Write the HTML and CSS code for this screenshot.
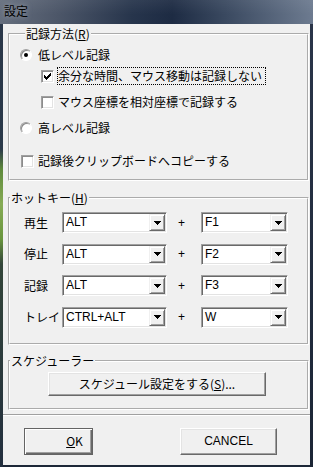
FILE: index.html
```html
<!DOCTYPE html>
<html lang="ja">
<head>
<meta charset="utf-8">
<title>設定</title>
<link rel="stylesheet" href="styles.css">
</head>
<body>
<div class="window">
  <div class="titlebar">設定</div>
  <div class="frame">
    <div class="client">
      <div class="groups">
        <fieldset class="group group-record">
          <legend class="legend legend-record">記録方法(<u>R</u>)</legend>
          <div class="row row-low">
            <span class="radio checked"></span><span class="label radio-label">低レベル記録</span>
          </div>
          <div class="row row-skip">
            <span class="checkbox checked"><svg width="7" height="7" viewBox="0 0 7 7" shape-rendering="crispEdges"><path d="M0 2h1v3H0zM1 3h1v3H1zM2 4h1v3H2zM3 3h1v3H3zM4 2h1v3H4zM5 1h1v3H5zM6 0h1v3H6z" fill="#000"/></svg></span><span class="label check-label focus">余分な時間、マウス移動は記録しない</span>
          </div>
          <div class="row row-rel">
            <span class="checkbox"></span><span class="label check-label">マウス座標を相対座標で記録する</span>
          </div>
          <div class="row row-high">
            <span class="radio"></span><span class="label radio-label">高レベル記録</span>
          </div>
          <div class="row row-clip">
            <span class="checkbox"></span><span class="label check-label">記録後クリップボードへコピーする</span>
          </div>
        </fieldset>

        <fieldset class="group group-hotkey">
          <legend class="legend">ホットキー(<u>H</u>)</legend>
          <div class="hotkeys">
            <span class="hk-label">再生</span>
            <div class="combo combo-mod"><span class="combo-text">ALT</span><span class="combo-btn"><svg width="7" height="4" viewBox="0 0 7 4" shape-rendering="crispEdges"><path d="M0 0h7v1H0zM1 1h5v1H1zM2 2h3v1H2zM3 3h1v1H3z" fill="#000"/></svg></span></div>
            <span class="plus">+</span>
            <div class="combo combo-key"><span class="combo-text">F1</span><span class="combo-btn"><svg width="7" height="4" viewBox="0 0 7 4" shape-rendering="crispEdges"><path d="M0 0h7v1H0zM1 1h5v1H1zM2 2h3v1H2zM3 3h1v1H3z" fill="#000"/></svg></span></div>

            <span class="hk-label">停止</span>
            <div class="combo combo-mod"><span class="combo-text">ALT</span><span class="combo-btn"><svg width="7" height="4" viewBox="0 0 7 4" shape-rendering="crispEdges"><path d="M0 0h7v1H0zM1 1h5v1H1zM2 2h3v1H2zM3 3h1v1H3z" fill="#000"/></svg></span></div>
            <span class="plus">+</span>
            <div class="combo combo-key"><span class="combo-text">F2</span><span class="combo-btn"><svg width="7" height="4" viewBox="0 0 7 4" shape-rendering="crispEdges"><path d="M0 0h7v1H0zM1 1h5v1H1zM2 2h3v1H2zM3 3h1v1H3z" fill="#000"/></svg></span></div>

            <span class="hk-label">記録</span>
            <div class="combo combo-mod"><span class="combo-text">ALT</span><span class="combo-btn"><svg width="7" height="4" viewBox="0 0 7 4" shape-rendering="crispEdges"><path d="M0 0h7v1H0zM1 1h5v1H1zM2 2h3v1H2zM3 3h1v1H3z" fill="#000"/></svg></span></div>
            <span class="plus">+</span>
            <div class="combo combo-key"><span class="combo-text">F3</span><span class="combo-btn"><svg width="7" height="4" viewBox="0 0 7 4" shape-rendering="crispEdges"><path d="M0 0h7v1H0zM1 1h5v1H1zM2 2h3v1H2zM3 3h1v1H3z" fill="#000"/></svg></span></div>

            <span class="hk-label">トレイ</span>
            <div class="combo combo-mod"><span class="combo-text">CTRL+ALT</span><span class="combo-btn"><svg width="7" height="4" viewBox="0 0 7 4" shape-rendering="crispEdges"><path d="M0 0h7v1H0zM1 1h5v1H1zM2 2h3v1H2zM3 3h1v1H3z" fill="#000"/></svg></span></div>
            <span class="plus">+</span>
            <div class="combo combo-key"><span class="combo-text">W</span><span class="combo-btn"><svg width="7" height="4" viewBox="0 0 7 4" shape-rendering="crispEdges"><path d="M0 0h7v1H0zM1 1h5v1H1zM2 2h3v1H2zM3 3h1v1H3z" fill="#000"/></svg></span></div>
          </div>
        </fieldset>

        <fieldset class="group group-sched">
          <legend class="legend">スケジューラー</legend>
          <div class="sched-body">
            <button class="btn btn-sched" type="button">スケジュール設定をする(<u>S</u>)...</button>
          </div>
        </fieldset>
      </div>

      <div class="separator"></div>

      <div class="buttons">
        <button class="btn btn-ok btn-default" type="button"><u>O</u>K</button>
        <button class="btn btn-cancel" type="button">CANCEL</button>
      </div>
    </div>
  </div>
</div>
</body>
</html>
```

FILE: styles.css
```css
* {
  box-sizing: border-box;
}

html, body {
  margin: 0;
  padding: 0;
  background: #1f2a3a;
}

body {
  font-family: "Noto Sans CJK JP", "Liberation Sans", sans-serif;
  font-size: 12px;
  color: #000;
}

u {
  text-decoration: underline;
  text-underline-offset: 1px;
}

.window {
  width: 313px;
  height: 467px;
  display: flex;
  flex-direction: column;
  overflow: hidden;
}

.titlebar {
  height: 24px;
  flex: none;
  padding-left: 4px;
  line-height: 22px;
  font-size: 12px;
  color: #000;
  text-shadow: 0 0 5px rgba(220, 225, 235, 0.55);
  background:
    linear-gradient(to bottom, rgba(255,255,255,0.06), rgba(255,255,255,0) 60%),
    linear-gradient(90deg, #656e7d 0%, #4d5769 18%, #27354c 42%, #1d2b43 55%, #3a4960 72%, #6d7b90 100%);
}

.frame {
  flex: 1;
  padding: 0 3px 2px 3px;
  background:
    linear-gradient(to bottom, #2a3749 0, #2c3a4a 125px, #5f8a3c 145px, #86ab55 180px, #6a963e 215px, #34463a 240px, #222e3e 100%) 0 0 / 3px 100% no-repeat,
    linear-gradient(to bottom, #2a3549, #1b2535) 100% 0 / 3px 100% no-repeat,
    #1d2737;
}

.client {
  height: 100%;
  background: #f0f0f0;
  display: flex;
  flex-direction: column;
}

.groups {
  padding: 3px 1px 0 5px;
  display: flex;
  flex-direction: column;
}

/* Etched group boxes */
.group {
  margin: 0;
  padding: 0;
  min-width: 0;
  width: 301px;
  border: 2px groove #ffffff;
}

.legend {
  padding: 0 1px;
  margin-left: 0;
  font-size: 12px;
  line-height: 14px;
  height: 14px;
  background: #f0f0f0;
}

.legend-record {
  margin-left: 5px;
}

.group-record {
  padding: 0 0 9px 10px;
}

.group-hotkey {
  margin-top: 10px;
}

.group-sched {
  margin-top: 9px;
}

/* rows in the record group */
.row {
  display: flex;
  align-items: center;
  height: 18px;
}

.row-low { margin-top: 5px; }
.row-skip { margin-top: 3px; margin-left: 21px; }
.row-rel { margin-top: 8px; margin-left: 21px; }
.row-high { margin-top: 8px; }
.row-clip { margin-top: 15px; margin-left: 1px; }

.label {
  line-height: 16px;
  white-space: nowrap;
}

.radio-label {
  margin-left: 6px;
}

.check-label {
  margin-left: 3px;
  padding: 0 3px 0 0;
  border: 1px solid transparent;
}

.focus {
  border: 1px dotted #000;
}

.radio {
  width: 12px;
  height: 12px;
  border-radius: 50%;
  flex: none;
  background: #fff;
  border: 1px solid;
  border-color: #a0a0a0 #ffffff #ffffff #a0a0a0;
  box-shadow: inset 1px 1px 0 #8a8a8a;
  display: flex;
  align-items: center;
  justify-content: center;
}

.radio.checked::after {
  content: "";
  width: 4px;
  height: 4px;
  border-radius: 50%;
  background: #000;
}

.checkbox {
  width: 13px;
  height: 13px;
  flex: none;
  background: #fff;
  border: 1px solid;
  border-color: #a0a0a0 #ffffff #ffffff #a0a0a0;
  box-shadow: inset 1px 1px 0 #8c8c8c, inset -1px -1px 0 #e3e3e3;
  display: flex;
  align-items: center;
  justify-content: center;
}

.checkbox svg {
  display: block;
}

/* hotkeys */
.hotkeys {
  display: grid;
  grid-template-columns: 38px 105px 34px 87px;
  grid-auto-rows: 21px;
  row-gap: 10.67px;
  align-items: center;
  padding: 7px 0 15px 14px;
}

.hk-label {
  line-height: 16px;
  white-space: nowrap;
}

.plus {
  font-family: "Liberation Sans", sans-serif;
  font-size: 12px;
  padding-left: 11px;
  line-height: 16px;
}

.combo {
  height: 21px;
  display: flex;
  padding: 1px;
  background: #fff;
  border: 1px solid;
  border-color: #a0a0a0 #ffffff #ffffff #a0a0a0;
  box-shadow: inset 1px 1px 0 #696969, inset -1px -1px 0 #e3e3e3;
}

.combo-text {
  flex: 1;
  padding-left: 2px;
  font-family: "Liberation Sans", sans-serif;
  font-size: 12px;
  line-height: 17px;
  white-space: nowrap;
  overflow: hidden;
}

.combo-btn {
  width: 16px;
  height: 17px;
  flex: none;
  background: #f0f0f0;
  border: 1px solid;
  border-color: #f0f0f0 #696969 #696969 #f0f0f0;
  box-shadow: inset 1px 1px 0 #ffffff, inset -1px -1px 0 #a0a0a0;
  display: flex;
  align-items: center;
  justify-content: center;
}

.combo-btn svg {
  display: block;
  margin-left: 1px;
}

/* scheduler */
.sched-body {
  padding: 4px 0 12px 38px;
}

.btn {
  font-family: "Noto Sans CJK JP", "Liberation Sans", sans-serif;
  font-size: 12px;
  color: #000;
  background: #f0f0f0;
  border: 1px solid;
  border-color: #ffffff #696969 #696969 #ffffff;
  box-shadow: inset -1px -1px 0 #a0a0a0, inset 1px 1px 0 #e3e3e3;
  padding: 0;
  margin: 0;
  display: flex;
  align-items: center;
  justify-content: center;
  line-height: 16px;
}

.btn-sched {
  width: 218px;
  height: 24px;
}

.separator {
  margin-top: 4px;
  height: 2px;
  border-top: 1px solid #a0a0a0;
  border-bottom: 1px solid #ffffff;
}

.buttons {
  display: flex;
  gap: 87px;
  padding: 12px 0 0 21px;
}

.btn-ok {
  width: 69px;
  height: 27px;
  padding-left: 32px;
}

.btn-cancel {
  width: 97px;
  height: 27px;
  font-family: "Liberation Sans", sans-serif;
}

.btn-default {
  border-color: #646464;
  box-shadow: inset 1px 1px 0 #ffffff, inset -1px -1px 0 #696969, inset -2px -2px 0 #a0a0a0;
}
```
